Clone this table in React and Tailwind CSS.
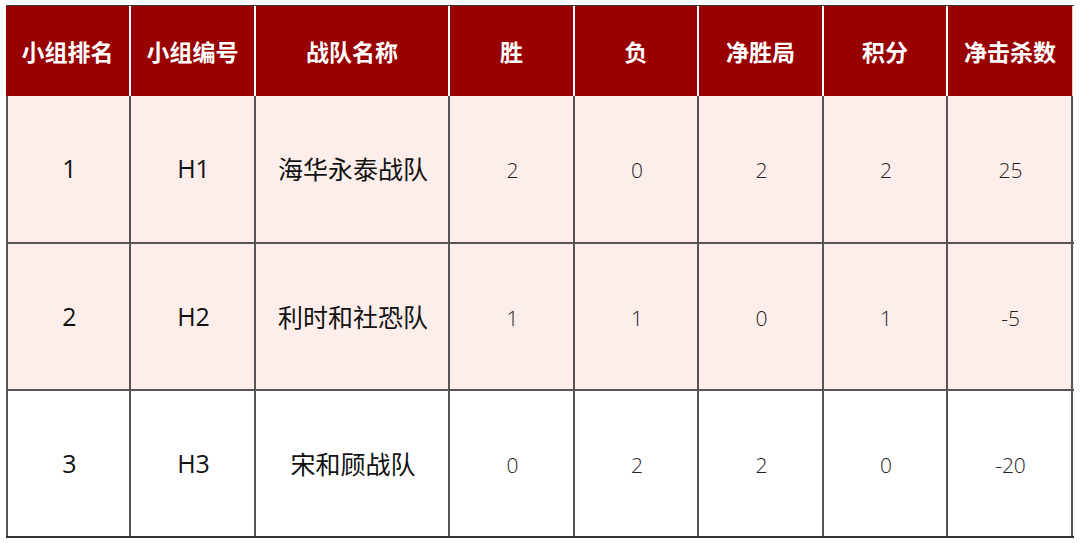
const cols = "grid grid-cols-[125px_125px_194px_125px_124px_125px_124px_125px]";

const header = ["小组排名", "小组编号", "战队名称", "胜", "负", "净胜局", "积分", "净击杀数"];

const rows = [
  { rank: "1", code: "H1", team: "海华永泰战队", stats: ["2", "0", "2", "2", "25"], bg: "bg-[#fdeeeb]" },
  { rank: "2", code: "H2", team: "利时和社恐队", stats: ["1", "1", "0", "1", "-5"], bg: "bg-[#fdeeeb]" },
  { rank: "3", code: "H3", team: "宋和顾战队", stats: ["0", "2", "2", "0", "-20"], bg: "bg-white" },
];

const latin = { fontFamily: '"Open Sans", "Noto Sans CJK SC", sans-serif' };

const App = () => {
  return (
    <div
      className="bg-white w-[1080px] h-[543px] pt-[5px] pl-[6px]"
      style={{ fontFamily: '"Noto Sans CJK SC", "Noto Sans", sans-serif' }}
    >
      <div className="w-[1068px]">
        {/* 表头 */}
        <div className={`${cols} border-t border-[#3a3a3a] h-[91px]`}>
          {header.map((h, i) => (
            <div
              key={h}
              className={`bg-[#990000] flex items-center justify-center text-white font-bold text-[23px] ${
                i < header.length - 1 ? "border-r-2 border-white" : "border-r border-[#f3c9c4]"
              }`}
            >
              {h}
            </div>
          ))}
        </div>

        {/* 数据 */}
        <div className="border-b-2 border-[#333]">
          {rows.map((r, idx) => (
            <div
              key={r.rank}
              className={`${cols} ${r.bg} ${idx === 0 ? "h-[146px]" : "h-[147px] border-t-2 border-[#555]"}`}
            >
              <div
                className="flex items-center justify-center border-l-2 border-r-2 border-[#555] text-[25px] text-[#111] pl-[2px]"
                style={latin}
              >
                {r.rank}
              </div>
              <div
                className="flex items-center justify-center border-r-2 border-[#555] text-[25px] text-[#111] pl-[2px]"
                style={latin}
              >
                {r.code}
              </div>
              <div className="flex items-center justify-center border-r-2 border-[#555] text-[25px] text-[#111] pl-[2px]">
                {r.team}
              </div>
              {r.stats.map((s, i) => (
                <div
                  key={i}
                  className="flex items-center justify-center border-r-2 border-[#555] text-[21px] font-light text-[#222] pt-[4px] pl-[2px]"
                  style={latin}
                >
                  {s}
                </div>
              ))}
            </div>
          ))}
        </div>
      </div>
    </div>
  );
};

export default App;
